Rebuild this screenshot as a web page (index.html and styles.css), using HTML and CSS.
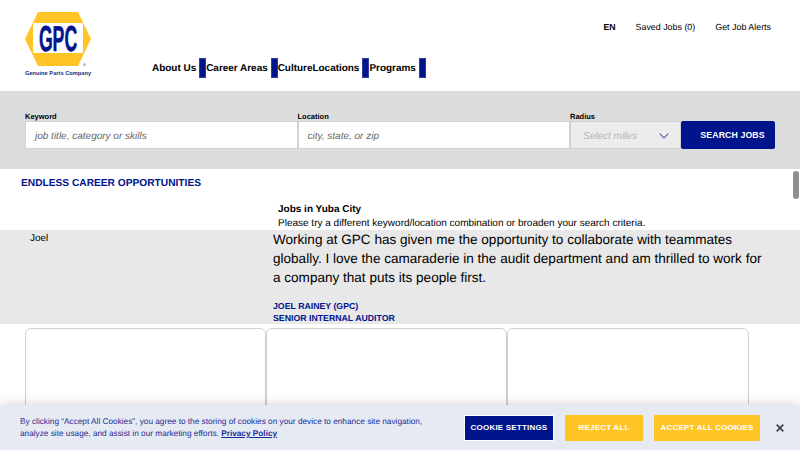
FILE: index.html
```html
<!DOCTYPE html>
<html lang="en">
<head>
<meta charset="utf-8">
<title>Jobs in Yuba City</title>
<link rel="stylesheet" href="styles.css">
</head>
<body>
<header class="site-header">
  <a class="logo" href="#">
    <svg class="logo-mark" viewBox="0 0 66 55" width="66" height="55" aria-hidden="true">
      <path class="logo-hex" d="M13 0H53L66 27L53 54H13L0 27Z"/>
      <rect class="logo-plate" x="8" y="11" width="50" height="30" rx="1"/>
      <text class="logo-text" transform="translate(33 39) scale(.49 1)" text-anchor="middle">GPC</text>
      <text class="logo-reg" x="58" y="54">®</text>
    </svg>
    <span class="logo-name">Genuine Parts Company</span>
  </a>
  <div class="header-right">
    <div class="utility">
      <a class="lang" href="#">EN</a>
      <a href="#">Saved Jobs (0)</a>
      <a href="#">Get Job Alerts</a>
    </div>
    <nav class="main-nav">
      <a href="#">About Us</a><span class="nav-btn"></span>
      <a href="#">Career Areas</a><span class="nav-btn"></span>
      <a href="#">Culture</a><a href="#">Locations</a><span class="nav-btn"></span>
      <a href="#">Programs</a><span class="nav-btn"></span>
    </nav>
  </div>
</header>

<section class="search">
  <label class="field field-keyword"><span class="field-label">Keyword</span>
    <span class="input">job title, category or skills</span></label>
  <label class="field field-location"><span class="field-label">Location</span>
    <span class="input">city, state, or zip</span></label>
  <label class="field field-radius"><span class="field-label">Radius</span>
    <span class="input input-select">Select miles
      <svg class="chev" viewBox="0 0 10 6" width="10" height="6" aria-hidden="true"><path d="M.7.7 5 5 9.300.7"/></svg>
    </span></label>
  <button class="search-btn" type="button">SEARCH JOBS</button>
</section>

<main>
  <h2 class="endless">ENDLESS CAREER OPPORTUNITIES</h2>
  <div class="results">
    <h1>Jobs in Yuba City</h1>
    <p>Please try a different keyword/location combination or broaden your search criteria.</p>
  </div>
  <section class="quote">
    <div class="quote-name">Joel</div>
    <div class="quote-body">
      <p>Working at GPC has given me the opportunity to collaborate with teammates globally. I love the camaraderie in the audit department and am thrilled to work for a company that puts its people first.</p>
      <div class="quote-by">JOEL RAINEY (GPC)<br>SENIOR INTERNAL AUDITOR</div>
    </div>
  </section>
  <section class="cards">
    <div class="card"></div><div class="card"></div><div class="card"></div>
  </section>
</main>

<div class="scroll-thumb"></div>

<aside class="cookie">
  <p class="cookie-text">By clicking “Accept All Cookies”, you agree to the storing of cookies on your device to enhance site navigation, analyze site usage, and assist in our marketing efforts. <a href="#">Privacy Policy</a></p>
  <div class="cookie-actions">
    <button class="cbtn cbtn-settings" type="button">COOKIE SETTINGS</button>
    <button class="cbtn cbtn-reject" type="button">REJECT ALL</button>
    <button class="cbtn cbtn-accept" type="button">ACCEPT ALL COOKIES</button>
    <svg class="close" viewBox="0 0 8 8" width="8" height="8" aria-hidden="true"><path d="M.7.7 7.300 7.300M7.300.7.7 7.300"/></svg>
  </div>
</aside>
</body>
</html>
```
FILE: styles.css
```css
* { box-sizing: border-box; }
html, body { margin: 0; height: 450px; overflow: hidden; }
body { font-family: "Liberation Sans", Arial, sans-serif; color: #000; background: #fff; position: relative; text-rendering: geometricPrecision; }
a { color: inherit; text-decoration: none; }

.site-header { height: 91px; display: flex; padding: 12px 0 0 25px; }
.logo { width: 127px; flex: none; display: flex; flex-direction: column; }
.logo-mark { display: block; }
.logo-hex { fill: #ffc425; }
.logo-plate { fill: #fff; }
.logo-text { font: 700 36px "Liberation Sans", sans-serif; fill: #00148c; stroke: #00148c; stroke-width: .6px; }
.logo-reg { font: 400 4px "Liberation Sans", sans-serif; fill: #1d3082; }
.logo-name { font-size: 5.700px; font-weight: 700; color: #1d3082; margin-top: 3px; white-space: nowrap; line-height: 8px; }
.header-right { flex: 1; display: flex; flex-direction: column; }
.utility { display: flex; justify-content: flex-end; gap: 20px; font-size: 8.900px; height: 31px; padding: 10px 29px 0 0; line-height: 11px; }
.lang { font-weight: 700; font-size: 8.750px; }
.main-nav { display: flex; align-items: center; font-size: 9.950px; font-weight: 700; margin-top: 14px; height: 21px; }
.main-nav a { padding-top: 2px; }
.nav-btn { width: 7px; height: 20px; background: #00148c; margin-left: 3px; border: 1px solid #2b3c9e; }

.search { height: 78px; background: #dcdcdc; display: flex; align-items: flex-start; padding: 21px 25px 0; }
.field { display: flex; flex-direction: column; }
.field-keyword, .field-location { width: 272.500px; }
.field-radius { width: 111px; }
.field-label { font-size: 7.500px; font-weight: 700; height: 9px; line-height: 9px; }
.input { height: 28px; background: #fff; border: 1px solid #d2d2d2; font-size: 10px; font-style: italic; color: #666; display: flex; align-items: center; padding: 2px 0 0 9px; }
.input-select { background: #ececec; color: #b4b4b4; padding-left: 12px; position: relative; }
.chev { position: absolute; right: 11px; top: 11px; fill: none; stroke: #5c6aa8; stroke-width: 1.200; }
.search-btn { width: 94px; height: 28px; margin-top: 9px; border: 0; border-radius: 2px; background: #00148c; color: #fff; font: 700 8.750px "Liberation Sans", sans-serif; letter-spacing: .1px; padding: 0 0 0 9px; }

.endless { margin: 0; height: 31px; padding: 9px 0 0 21px; font-size: 10.200px; line-height: 12px; color: #00148c; }
.results { height: 30px; padding: 3px 0 0 278px; font-size: 10px; }
.results h1 { margin: 0; font-size: 10px; line-height: 14px; }
.results p { margin: 0; line-height: 13px; }
.quote { height: 94px; background: #e8e8e8; display: flex; }
.quote-name { width: 273px; flex: none; padding: 2px 0 0 30px; font-size: 10px; line-height: 13px; }
.quote-body { width: 496px; }
.quote-body p { margin: 0; font-size: 13.550px; line-height: 18.750px; padding-top: 1px; }
.quote-by { margin-top: 13px; font-size: 8.750px; font-weight: 700; line-height: 12px; color: #00148c; }
.cards { display: flex; padding: 4px 0 0 25px; }
.card { width: 241.200px; height: 122px; background: #fff; border: 1px solid #d0d0d0; border-radius: 6px; }

.scroll-thumb { position: absolute; right: 1px; top: 171px; width: 6px; height: 28px; background: #8f8f8f; border-radius: 3px; }

.cookie { position: absolute; left: 0; right: 0; bottom: 0; height: 45px; background: #e6ebf3; box-shadow: 0 0 12px rgba(0,0,0,.2); display: flex; align-items: center; justify-content: space-between; padding: 0 16px 0 20px; }
.cookie-text { margin: 0; width: 420px; flex: none; font-size: 8.250px; line-height: 12px; color: #1a2d96; }
.cookie-text a { font-weight: 700; text-decoration: underline; }
.cookie-actions { display: flex; align-items: center; }
.cbtn { height: 26px; border: 0; color: #fff; font: 700 8px "Liberation Sans", sans-serif; letter-spacing: .2px; padding: 0; }
.cbtn-settings { width: 90px; background: #00148c; border: 1px solid #fff; }
.cbtn-reject { width: 78px; background: #ffc425; margin-left: 11px; }
.cbtn-accept { width: 106px; background: #ffc425; margin-left: 11px; }
.close { margin-left: 16px; fill: none; stroke: #444; stroke-width: 1.800; }
```
